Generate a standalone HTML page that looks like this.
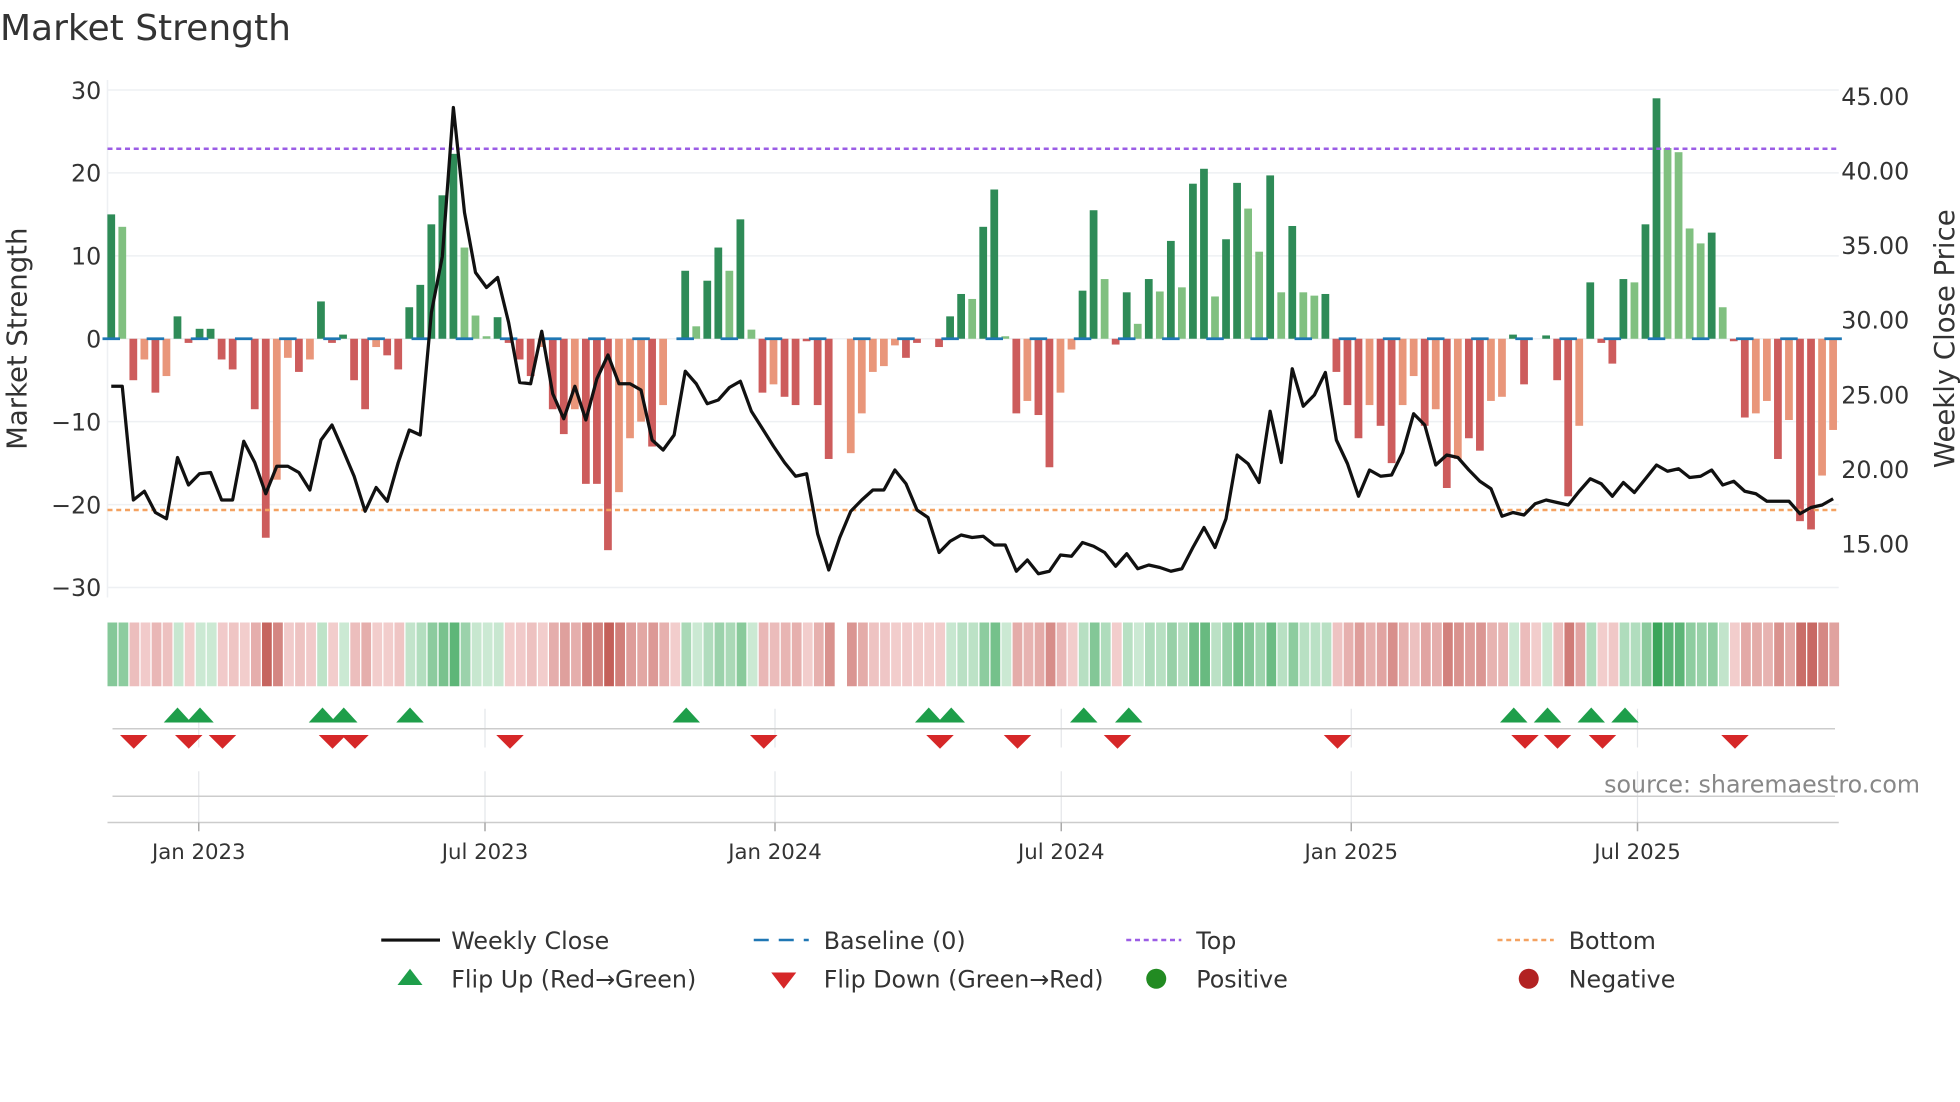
<!DOCTYPE html>
<html><head><meta charset="utf-8"><style>
html,body{margin:0;padding:0;background:#fff;overflow:hidden}
svg{display:block;font-family:"DejaVu Sans","Liberation Sans",sans-serif}
</style></head><body>
<svg id="s" width="1960" height="1102" viewBox="0 0 1568 881.6" xmlns="http://www.w3.org/2000/svg">
<rect width="1568" height="882" fill="#fff"/>
<text x="0" y="32" font-size="28.8" fill="#333">Market Strength</text>
<g id="grid"></g>
<g id="bars"></g>
<g id="heat"></g>
<g id="flips"></g>
<text x="0" y="0" font-size="22" fill="#333" text-anchor="middle" transform="translate(21,271) rotate(-90)">Market Strength</text>
<text x="0" y="0" font-size="22" fill="#333" text-anchor="middle" transform="translate(1563,271) rotate(-90)">Weekly Close Price</text>
<text x="1536" y="634" font-size="19" fill="#888" text-anchor="end">source: sharemaestro.com</text>
<g font-size="19" fill="#333">
<line x1="305" y1="752" x2="352" y2="752" stroke="#111" stroke-width="2.5"/>
<text x="361" y="759">Weekly Close</text>
<line x1="603" y1="752" x2="647" y2="752" stroke="#1f77b4" stroke-width="2" stroke-dasharray="12,8"/>
<text x="659" y="759">Baseline (0)</text>
<line x1="901" y1="752" x2="945" y2="752" stroke="#9b5de5" stroke-width="2" stroke-dasharray="4,3"/>
<text x="957" y="759">Top</text>
<line x1="1198" y1="752" x2="1243" y2="752" stroke="#f4a261" stroke-width="2" stroke-dasharray="4,3"/>
<text x="1255" y="759">Bottom</text>
<polygon points="318,788 338,788 328,775" fill="#1e9e4a"/>
<text x="361" y="790">Flip Up (Red→Green)</text>
<polygon points="617,778 637,778 627,791" fill="#d62728"/>
<text x="659" y="790">Flip Down (Green→Red)</text>
<circle cx="925" cy="783" r="8" fill="#228b22"/>
<text x="957" y="790">Positive</text>
<circle cx="1223" cy="783" r="8" fill="#b22222"/>
<text x="1255" y="790">Negative</text>
</g>
</svg>
<script>
var NS="http://www.w3.org/2000/svg";
function el(p,t,a,txt){var e=document.createElementNS(NS,t);for(var k in a)e.setAttribute(k,a[k]);if(txt!=null)e.textContent=txt;document.getElementById(p).appendChild(e);return e;}
var V=[[15,'d'],[13.5,'l'],[-5,'r'],[-2.5,'s'],[-6.5,'r'],[-4.5,'s'],[2.7,'d'],[-0.5,'r'],[1.2,'d'],[1.2,'d'],[-2.5,'r'],[-3.7,'r'],[0,'r'],[-8.5,'r'],[-24,'r'],[-17,'s'],[-2.3,'s'],[-4,'r'],[-2.5,'s'],[4.5,'d'],[-0.5,'r'],[0.5,'d'],[-5,'r'],[-8.5,'r'],[-1,'s'],[-2,'r'],[-3.7,'r'],[3.8,'d'],[6.5,'d'],[13.8,'d'],[17.3,'d'],[22.3,'d'],[11,'l'],[2.8,'l'],[0.3,'l'],[2.6,'d'],[-0.5,'r'],[-2.5,'r'],[-4.5,'r'],[-1,'s'],[-8.5,'r'],[-11.5,'r'],[-8.5,'s'],[-17.5,'r'],[-17.5,'r'],[-25.5,'r'],[-18.5,'s'],[-12,'s'],[-10,'s'],[-13,'r'],[-8,'s'],[0,'r'],[8.2,'d'],[1.5,'l'],[7,'d'],[11,'d'],[8.2,'l'],[14.4,'d'],[1.1,'l'],[-6.5,'r'],[-5.5,'s'],[-7,'r'],[-8,'r'],[-0.3,'r'],[-8,'r'],[-14.5,'r'],[0,'r'],[-13.8,'s'],[-9,'s'],[-4,'s'],[-3.3,'s'],[-0.8,'s'],[-2.3,'r'],[-0.5,'r'],[0,'r'],[-1,'r'],[2.7,'d'],[5.4,'d'],[4.8,'l'],[13.5,'d'],[18,'d'],[0.3,'l'],[-9,'r'],[-7.5,'s'],[-9.2,'r'],[-15.5,'r'],[-6.5,'s'],[-1.3,'s'],[5.8,'d'],[15.5,'d'],[7.2,'l'],[-0.7,'r'],[5.6,'d'],[1.8,'l'],[7.2,'d'],[5.7,'l'],[11.8,'d'],[6.2,'l'],[18.7,'d'],[20.5,'d'],[5.1,'l'],[12,'d'],[18.8,'d'],[15.7,'l'],[10.5,'l'],[19.7,'d'],[5.6,'l'],[13.6,'d'],[5.6,'l'],[5.2,'l'],[5.4,'d'],[-4,'r'],[-8,'r'],[-12,'r'],[-8,'s'],[-10.5,'r'],[-15,'r'],[-8,'s'],[-4.5,'s'],[-10.5,'r'],[-8.5,'s'],[-18,'r'],[-14.5,'s'],[-12,'r'],[-13.5,'r'],[-7.5,'s'],[-7,'s'],[0.5,'d'],[-5.5,'r'],[0,'r'],[0.4,'d'],[-5,'r'],[-19,'r'],[-10.5,'s'],[6.8,'d'],[-0.5,'r'],[-3,'r'],[7.2,'d'],[6.8,'l'],[13.8,'d'],[29,'d'],[23,'l'],[22.5,'l'],[13.3,'l'],[11.5,'l'],[12.8,'d'],[3.8,'l'],[-0.3,'r'],[-9.5,'r'],[-9,'s'],[-7.5,'s'],[-14.5,'r'],[-9.8,'s'],[-22,'r'],[-23,'r'],[-16.5,'s'],[-11,'s']];
var P=[309,309,400,393,410,415,366,388,379,378,400,400,353,370,395,373,373,378,392,352,340,360,381,409,390,401,370,344,348,250,205,86,170,218,230,222,258,306,307,265,315,335,309,336,303,284,307,307,312,352,360,348,297,307,323,320,310,305,329,343,357,370,381,379,427,456,430,409,400,392,392,376,387,408,414,442,433,428,430,429,436,436,457,448,459,457,444,445,434,437,442,453,443,455,452,454,457,455,438,422,438,415,364,371,386,329,370,295,325,316,298,352,371,397,376,381,380,362,331,340,372,364,366,376,385,391,413,410,412,403,400,402,404,393,383,387,397,386,394,383,372,377,375,382,381,376,388,385,393,395,401,401,401,411,406,404,399];
var C={d:'#2e8b57',l:'#80c080',r:'#cd5c5c',s:'#e9967a'};
function X(i){return 89+i*8.83;}
function Y(v){return 271-v*6.633;}
[30,20,10,0,-10,-20,-30].forEach(function(v){
 el('grid','line',{x1:86,x2:1471,y1:Y(v),y2:Y(v),stroke:'#eef0f3','stroke-width':1.2});
 el('grid','text',{x:81,y:Y(v)+7,'font-size':19,fill:'#333','text-anchor':'end'},(v<0?'\u2212'+(-v):v));
});
[45,40,35,30,25,20,15].forEach(function(v){
 var y=77+(45-v)*11.93;
 el('grid','text',{x:1473,y:y+7,'font-size':19,fill:'#333'},v.toFixed(2));
});
el('grid','line',{x1:86,x2:86,y1:64,y2:478,stroke:'#eef0f3','stroke-width':1.2});
V.forEach(function(b,i){var v=b[0];if(Math.abs(v)<0.05)return;var x=X(i)-3.1;
 el('bars','rect',{x:x,y:v>0?Y(v):Y(0),width:6.2,height:Math.abs(v)*6.633,fill:C[b[1]]});});
for(var i=0;i<V.length;i+=4){el('bars','line',{x1:X(i)-7,x2:X(i)+7,y1:271,y2:271,stroke:'#1f77b4','stroke-width':2.2});}
el('bars','line',{x1:86,x2:1471,y1:119,y2:119,stroke:'#9b5de5','stroke-width':2,'stroke-dasharray':'4,3'});
el('bars','line',{x1:86,x2:1471,y1:408,y2:408,stroke:'#f4a261','stroke-width':2,'stroke-dasharray':'4,3'});
var pts=P.map(function(y,i){return X(i).toFixed(1)+','+y;}).join(' ');
el('bars','polyline',{points:pts,fill:'none',stroke:'#111','stroke-width':2.6,'stroke-linejoin':'round'});
function mix(a,b,t){return 'rgb('+[0,1,2].map(function(k){return Math.round(a[k]+(b[k]-a[k])*t)}).join(',')+')';}
V.forEach(function(b,i){var v=b[0];var col;
 if(i==66)return;
 var pos=(b[1]=='d'||b[1]=='l');
 var m=Math.max(Math.abs(v),2);
 if(pos)col=mix([214,238,220],[58,165,90],Math.min(1,m/29));
 else col=mix([246,214,214],[196,96,90],Math.min(1,m/25));
 el('heat','rect',{x:86+i*8.83,y:498,width:7.8,height:51,fill:col});});
[159,388,620,849,1081,1310].forEach(function(x){
 el('flips','line',{x1:x,x2:x,y1:567,y2:598,stroke:'#e4e6ea','stroke-width':1});
 el('flips','line',{x1:x,x2:x,y1:617,y2:665,stroke:'#e4e6ea','stroke-width':1});
});
el('flips','line',{x1:90,x2:1468,y1:583,y2:583,stroke:'#ccc','stroke-width':1.2});
el('flips','line',{x1:90,x2:1468,y1:637,y2:637,stroke:'#ccc','stroke-width':1.2});
el('flips','line',{x1:86,x2:1471,y1:658,y2:658,stroke:'#ccc','stroke-width':1.2});
[[159,'Jan 2023'],[388,'Jul 2023'],[620,'Jan 2024'],[849,'Jul 2024'],[1081,'Jan 2025'],[1310,'Jul 2025']].forEach(function(t){
 el('flips','line',{x1:t[0],x2:t[0],y1:658,y2:665,stroke:'#aaa','stroke-width':1.2});
 el('flips','text',{x:t[0],y:687,'font-size':17,fill:'#333','text-anchor':'middle'},t[1]);
});
[142,160,258,275,328,549,743,761,867,903,1211,1238,1273,1300].forEach(function(x){
 el('flips','polygon',{points:(x-11)+',578 '+(x+11)+',578 '+x+',566',fill:'#1e9e4a'});});
[107,151,178,266,284,408,611,752,814,894,1070,1220,1246,1282,1388].forEach(function(x){
 el('flips','polygon',{points:(x-11)+',588 '+(x+11)+',588 '+x+',599',fill:'#d62728'});});
</script>
</body></html>
